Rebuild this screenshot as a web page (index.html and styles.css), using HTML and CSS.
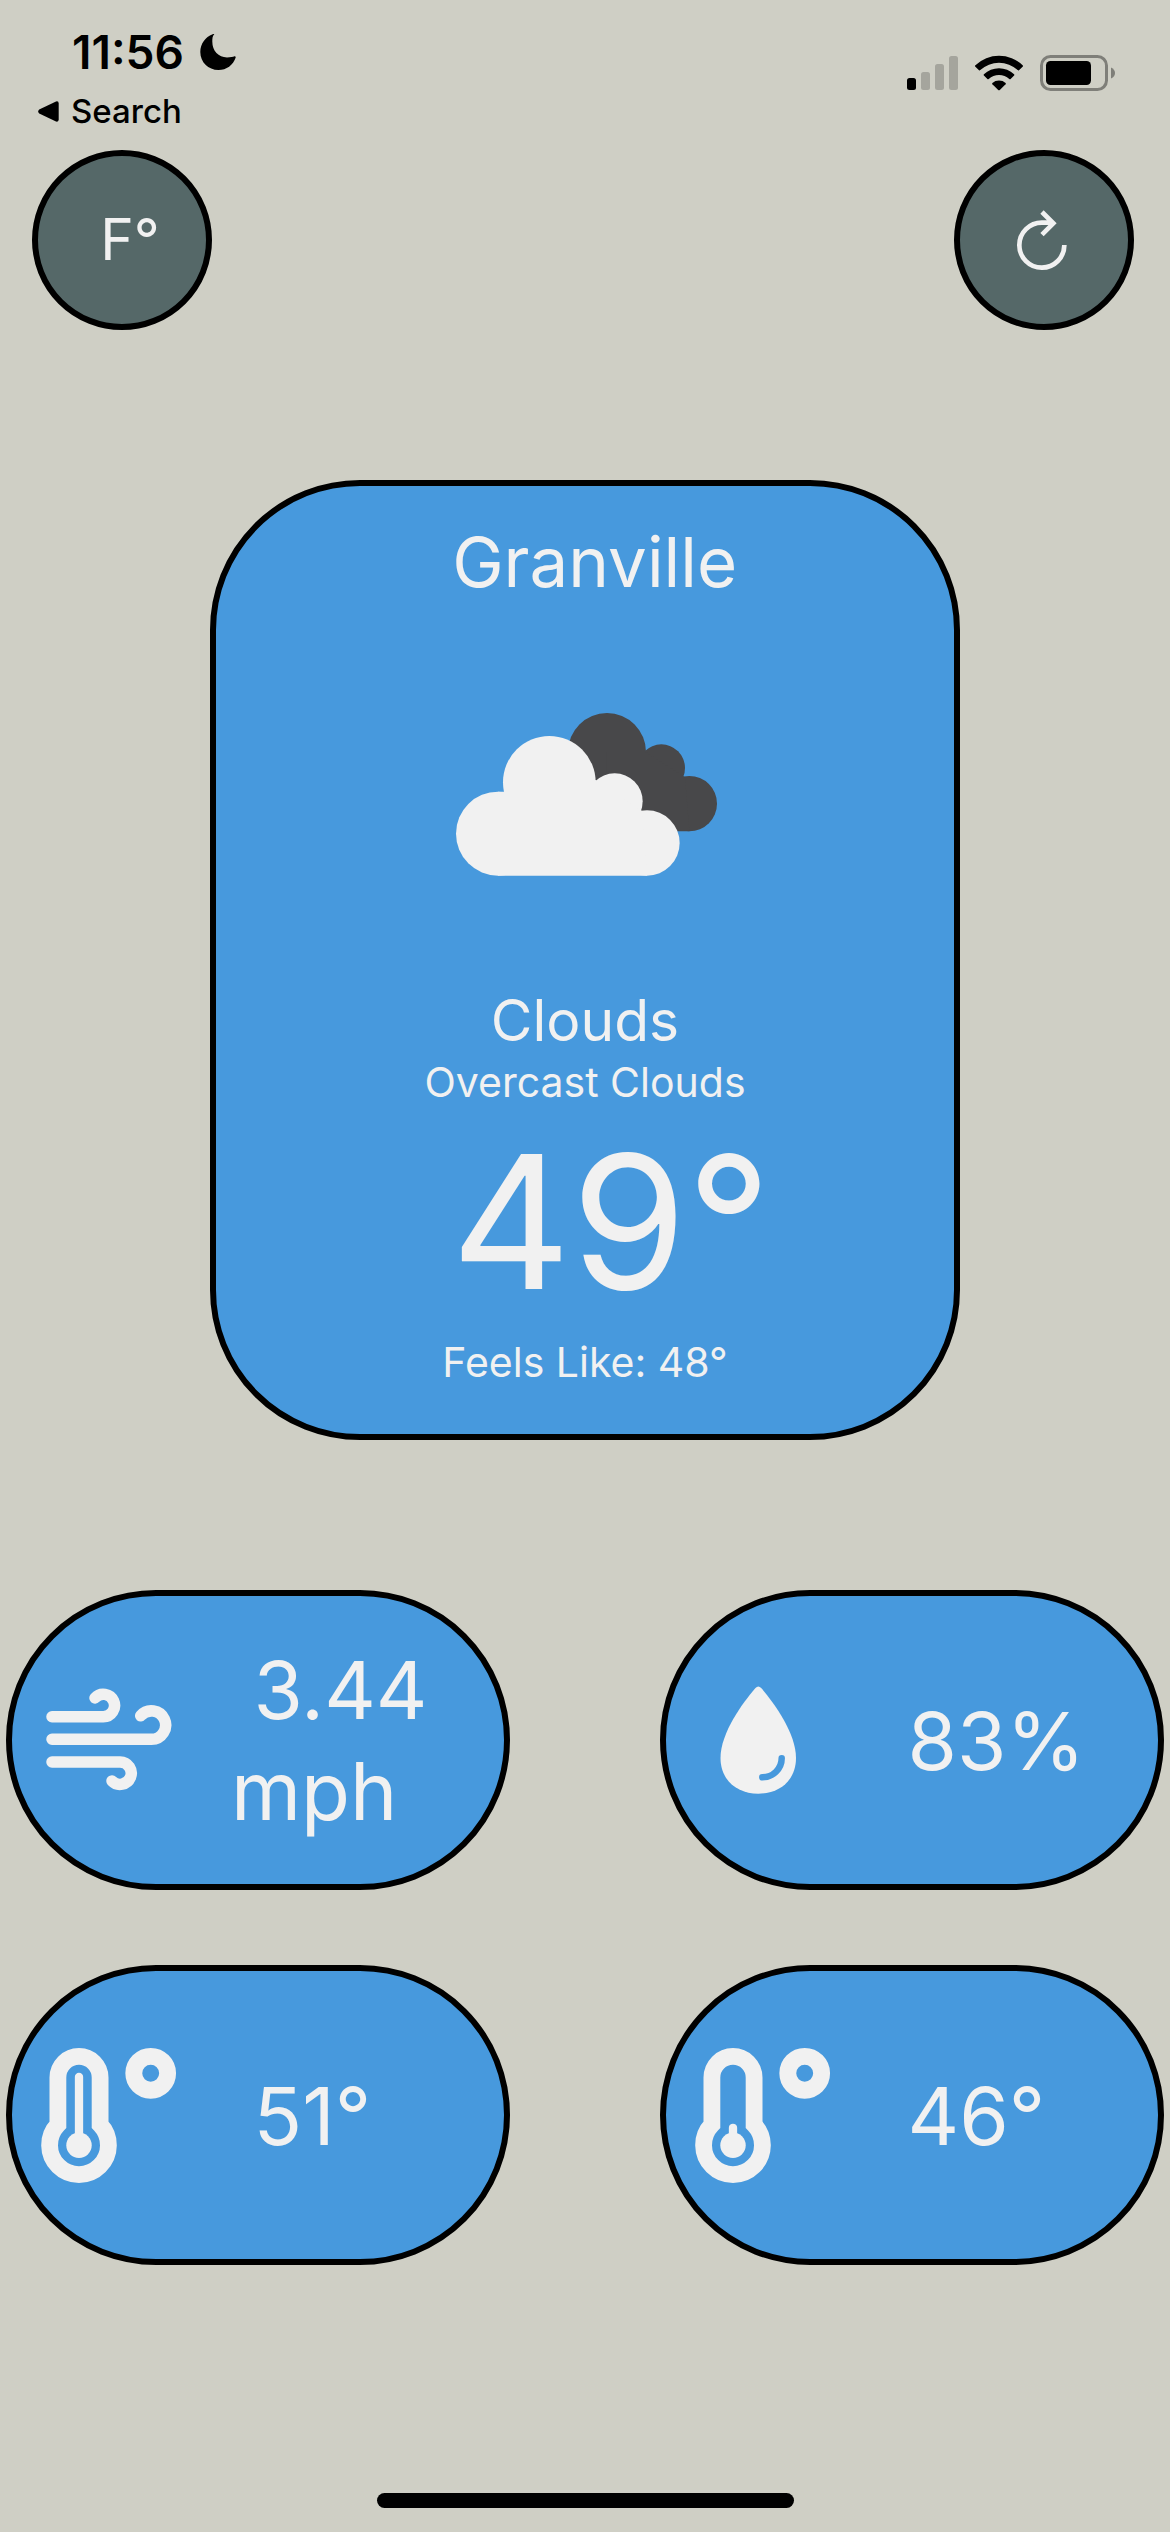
FILE: index.html
```html
<!DOCTYPE html>
<html lang="en">
<head>
  <meta charset="utf-8">
  <meta name="viewport" content="width=device-width, initial-scale=1">
  <title>Weather</title>
  <link rel="stylesheet" href="styles.css">
</head>
<body>
  <header class="status">
    <div class="status-left">
      <div class="clock">
        <span>11:56</span>
        <svg class="moon" viewBox="0 0 36 36" aria-hidden="true"><path d="M14 0.600C12.600 1.800 12.300 4.500 12.300 7.500C12.300 17 18.500 23.400 27 23.400C30.500 23.400 33 22.800 34.500 22.200C35.400 22 35.900 22.700 35.600 23.700C33.200 31 26.500 36 18.500 36C8.200 36 0.300 28.200 0.300 18C0.300 10 5.200 2.900 12.600 0.200C13.900 -0.200 14.600 0.100 14 0.600Z"/></svg>
      </div>
      <a class="back" href="#">
        <svg class="back-arrow" viewBox="0 0 21 21" aria-hidden="true"><path d="M1.200 8.600L18 0.500Q20.700 -0.200 20.700 2.500V18.500Q20.700 21.200 18 20.500L1.200 12.400Q-0.800 10.500 1.200 8.600Z"/></svg>
        <span>Search</span>
      </a>
    </div>
    <div class="status-right">
      <svg class="signal" viewBox="0 0 51 34" aria-hidden="true">
        <rect x="0" y="22" width="9" height="12" rx="2.500"/>
        <g fill="#a5a59d"><rect x="14" y="16" width="9" height="18" rx="2.500"/><rect x="28" y="8" width="9" height="26" rx="2.500"/><rect x="42" y="0" width="9" height="34" rx="2.500"/></g>
      </svg>
      <svg class="wifi" viewBox="0 0 48 36" aria-hidden="true">
        <path d="M0.400 10.300A34 34 0 0 1 47.600 10.300Q48.400 11 47.600 11.800L44 15.200Q43.400 15.700 42.700 15.100A27.500 27.500 0 0 0 5.300 15.100Q4.600 15.700 4 15.200L0.400 11.800Q-0.400 11 0.400 10.300Z"/>
        <path d="M8.900 19.200A22 22 0 0 1 39.100 19.200Q39.800 19.900 39.100 20.600L35.600 24Q35 24.500 34.300 23.900A15.500 15.500 0 0 0 13.700 23.900Q13 24.500 12.400 24L8.900 20.600Q8.200 19.900 8.900 19.200Z"/>
        <path d="M17.400 28A10 10 0 0 1 30.600 28Q31.200 28.700 30.600 29.300L24.800 35Q24 35.700 23.200 35L17.400 29.300Q16.800 28.700 17.400 28Z"/>
      </svg>
      <svg class="battery" viewBox="0 0 75 36" aria-hidden="true">
        <rect x="1.500" y="1.500" width="65" height="33" rx="9" fill="none" stroke="#7f7f79" stroke-width="3"/>
        <rect x="6" y="6" width="45" height="24" rx="4.500"/>
        <path d="M71 12.500V23.500Q75 21.500 75 18Q75 14.500 71 12.500Z" fill="#7f7f79"/>
      </svg>
    </div>
  </header>

  <nav class="actions">
    <button class="round" type="button">&nbsp;F°</button>
    <button class="round" type="button" aria-label="Refresh">
      <svg class="refresh" viewBox="426 624 192 192" aria-hidden="true"><path d="M583 735A67.500 67.500 0 1 1 516 668H546M516 636L550 670L516 704"/></svg>
    </button>
  </nav>

  <main class="content">
    <section class="card">
      <h1 class="city">&nbsp;Granville</h1>
      <svg class="clouds" viewBox="-15 0 900 600" role="img" aria-label="Cloudy">
        <g fill="#48484a"><circle cx="501" cy="186" r="117"/><circle cx="664" cy="234" r="71"/><circle cx="748" cy="341" r="83"/><path d="M560 186H617L735 262L748 424H500V186Z"/></g>
        <g fill="#f1f1f1"><circle cx="328" cy="277" r="139"/><circle cx="174" cy="431" r="126"/><circle cx="524" cy="334" r="84"/><circle cx="621" cy="459" r="98"/><path d="M174 305H300V270H467L605 362L621 557H174Z"/></g>
      </svg>
      <p class="condition">Clouds</p>
      <p class="note">Overcast Clouds</p>
      <p class="temperature">&nbsp;49°</p>
      <p class="note">Feels Like: 48°</p>
    </section>

    <section class="metrics">
      <div class="metric">
        <svg class="icon" viewBox="0 0 144 144" role="img" aria-label="Wind"><path fill="none" stroke="#f1f1f1" stroke-width="11.500" stroke-linecap="round" d="M16 48.700H67.300A11.200 11.200 0 1 0 59 30M16 71.300H115.500A14.200 14.200 0 1 0 104.700 47.800M16 94H84A11.200 11.200 0 1 1 76 113"/></svg>
        <p class="value">&nbsp;3.44 mph</p>
      </div>
      <div class="metric">
        <svg class="icon" viewBox="0 0 144 144" role="img" aria-label="Humidity"><path fill="#f1f1f1" d="M65.500 20Q68.300 17 71.200 20C84 35 106 65 106 90C106 112 90 125.700 68.300 125.700C46.700 125.700 30.500 112 30.500 90C30.500 65 52.500 35 65.500 20Z"/><path fill="none" stroke="#4799dd" stroke-width="6.500" stroke-linecap="round" d="M91.700 90.300A19.500 19 0 0 1 72.300 109.300"/></svg>
        <p class="value">&nbsp;83%</p>
      </div>
      <div class="metric">
        <svg class="icon" viewBox="0 0 144 144" role="img" aria-label="High"><g fill="none" stroke="#f1f1f1"><path stroke-width="16.800" d="M21.900 34.500A21.100 21.100 0 0 1 64.100 34.500V81.700A29.400 29.400 0 1 1 21.900 81.700Z"/><circle cx="114.700" cy="30.300" r="16.900" stroke-width="16.900"/><path stroke-width="8.300" stroke-linecap="round" d="M43 34V102"/></g><circle cx="43" cy="102.200" r="12.700" fill="#f1f1f1"/></svg>
        <p class="value">&nbsp;51°</p>
      </div>
      <div class="metric">
        <svg class="icon" viewBox="0 0 144 144" role="img" aria-label="Low"><g fill="none" stroke="#f1f1f1"><path stroke-width="16.800" d="M21.900 34.500A21.100 21.100 0 0 1 64.100 34.500V81.700A29.400 29.400 0 1 1 21.900 81.700Z"/><circle cx="114.700" cy="30.300" r="16.900" stroke-width="16.900"/><path stroke-width="8.300" stroke-linecap="round" d="M43 84.800V102"/></g><circle cx="43" cy="102.200" r="12.700" fill="#f1f1f1"/></svg>
        <p class="value">&nbsp;46°</p>
      </div>
    </section>
  </main>

  <div class="home-indicator"></div>
</body>
</html>
```
FILE: styles.css
```css
* {
  box-sizing: border-box;
}

body {
  margin: 0;
  min-height: 100vh;
  display: flex;
  flex-direction: column;
  background: #cfcfc5;
  color: #000;
  font-family: Inter, "Liberation Sans", sans-serif;
}

h1,
p {
  margin: 0;
  font-weight: 400;
}

svg {
  display: block;
  flex: none;
}

/* Status bar */
.status {
  display: flex;
  justify-content: space-between;
  align-items: flex-start;
  height: 150px;
  padding: 24px 55px 0 38px;
}

.clock {
  display: flex;
  align-items: center;
  gap: 16px;
  padding-left: 34px;
  font-size: 46px;
  font-weight: 600;
  line-height: 56px;
}

.moon {
  width: 36px;
  height: 36px;
}

.back {
  display: flex;
  align-items: center;
  gap: 12px;
  margin-top: 11px;
  color: inherit;
  font-size: 33px;
  font-weight: 500;
  line-height: 40px;
  text-decoration: none;
}

.back-arrow {
  width: 21px;
  height: 21px;
}

.status-right {
  display: flex;
  align-items: center;
  gap: 17px;
  padding-top: 31px;
}

.signal {
  width: 51px;
  height: 34px;
}

.wifi {
  width: 48px;
  height: 36px;
}

.battery {
  width: 75px;
  height: 36px;
}

/* Top buttons */
.actions {
  display: flex;
  justify-content: space-between;
  padding: 0 36px 0 32px;
}

.round {
  display: flex;
  align-items: center;
  justify-content: center;
  width: 180px;
  height: 180px;
  padding: 0;
  border: 6px solid #000;
  border-radius: 50%;
  background: #556868;
  color: #f1f1f1;
  font: inherit;
  font-size: 57px;
  line-height: 72px;
}

.refresh {
  width: 64px;
  height: 64px;
  fill: none;
  stroke: #f1f1f1;
  stroke-width: 14;
}

/* Current conditions */
.content {
  display: flex;
  flex-direction: column;
  align-items: center;
  gap: 150px;
  padding: 150px 6px 0;
  color: #f1f1f1;
}

.card {
  display: flex;
  flex-direction: column;
  align-items: center;
  width: 100%;
  max-width: 750px;
  padding: 33px 24px 47px;
  border: 6px solid #000;
  border-radius: 150px;
  background: #4799dd;
}

.city {
  font-size: 69px;
  line-height: 86px;
}

.clouds {
  width: 300px;
  height: 200px;
  margin: 85px 0 95px;
}

.condition {
  font-size: 57px;
  line-height: 72px;
}

.note {
  font-size: 41px;
  line-height: 50px;
}

.temperature {
  font-size: 186px;
  line-height: 230px;
}

/* Metric pills */
.metrics {
  display: grid;
  grid-template-columns: 1fr 1fr;
  gap: 75px 150px;
  width: 100%;
}

.metric {
  display: flex;
  align-items: center;
  gap: 51px;
  min-height: 300px;
  padding: 0 36px 0 24px;
  border: 6px solid #000;
  border-radius: 150px;
  background: #4799dd;
}

.icon {
  width: 144px;
  height: 144px;
}

.value {
  font-size: 80px;
  line-height: 101px;
}

.home-indicator {
  width: 417px;
  height: 15px;
  margin: auto auto 24px;
  border-radius: 8px;
  background: #000;
}
```
